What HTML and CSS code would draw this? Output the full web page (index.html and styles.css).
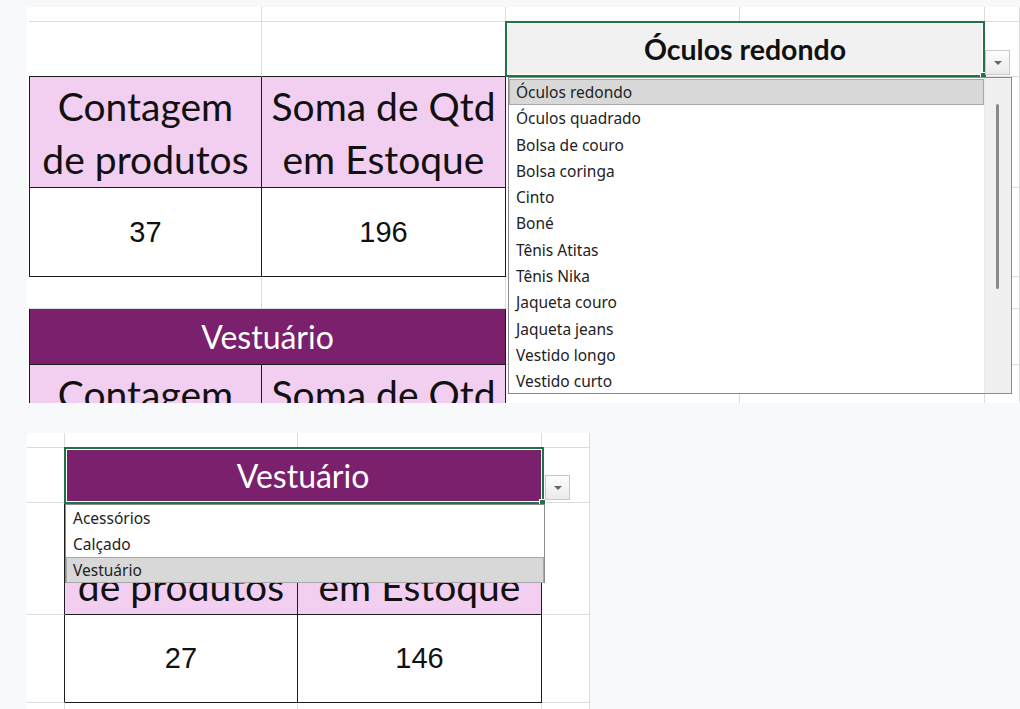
FILE: index.html
```html
<!DOCTYPE html>
<html lang="pt-BR">
<head>
  <meta charset="UTF-8">
  <meta name="viewport" content="width=device-width, initial-scale=1.0">
  <title>Estoque por categoria</title>
  <link rel="stylesheet" href="styles.css">
</head>
<body>
  <!-- produto selecionado -->
  <div class="sheet sheet-top">
    <div class="cell"></div>
    <div class="cell"></div>
    <div class="cell"></div>
    <div class="cell"></div>
    <div class="cell"></div>

    <div class="cell above"></div>
    <div class="cell above"></div>
    <div class="cell span2 picker grey">
      Óculos redondo
      <span class="sel"><span class="handle"></span></span>
      <span class="arrow"></span>
      <div class="list list-long">
        <div class="items">
          <div class="item active">Óculos redondo</div>
          <div class="item">Óculos quadrado</div>
          <div class="item">Bolsa de couro</div>
          <div class="item">Bolsa coringa</div>
          <div class="item">Cinto</div>
          <div class="item">Boné</div>
          <div class="item">Tênis Atitas</div>
          <div class="item">Tênis Nika</div>
          <div class="item">Jaqueta couro</div>
          <div class="item">Jaqueta jeans</div>
          <div class="item">Vestido longo</div>
          <div class="item">Vestido curto</div>
        </div>
        <div class="scrollbar"><span class="thumb"></span></div>
      </div>
    </div>
    <div class="cell"></div>

    <div class="cell tb hd first">Contagem<br>de produtos</div>
    <div class="cell tb hd">Soma de Qtd<br>em Estoque</div>
    <div class="cell"></div>
    <div class="cell"></div>
    <div class="cell"></div>

    <div class="cell tb num first">37</div>
    <div class="cell tb num">196</div>
    <div class="cell"></div>
    <div class="cell"></div>
    <div class="cell"></div>

    <div class="cell"></div>
    <div class="cell"></div>
    <div class="cell"></div>
    <div class="cell"></div>
    <div class="cell"></div>

    <div class="cell tb first span2 purple">Vestuário</div>
    <div class="cell"></div>
    <div class="cell"></div>
    <div class="cell"></div>

    <div class="cell tb hd first">Contagem<br>de produtos</div>
    <div class="cell tb hd">Soma de Qtd<br>em Estoque</div>
    <div class="cell"></div>
    <div class="cell"></div>
    <div class="cell"></div>
  </div>

  <!-- categoria selecionada -->
  <div class="sheet sheet-bottom">
    <div class="cell"></div>
    <div class="cell"></div>
    <div class="cell"></div>
    <div class="cell"></div>

    <div class="cell"></div>
    <div class="cell tb span2 picker purple">
      Vestuário
      <span class="sel sel-wide"><span class="handle"></span></span>
      <span class="arrow arrow-wide"></span>
      <div class="list list-short">
        <div class="items">
          <div class="item">Acessórios</div>
          <div class="item">Calçado</div>
          <div class="item active">Vestuário</div>
        </div>
      </div>
    </div>
    <div class="cell"></div>

    <div class="cell left"></div>
    <div class="cell tb hd">Contagem<br>de produtos</div>
    <div class="cell tb hd">Soma de Qtd<br>em Estoque</div>
    <div class="cell"></div>

    <div class="cell left"></div>
    <div class="cell tb num">27</div>
    <div class="cell tb num">146</div>
    <div class="cell"></div>

    <div class="cell"></div>
    <div class="cell"></div>
    <div class="cell"></div>
    <div class="cell"></div>
  </div>
</body>
</html>
```

FILE: styles.css
```css
body {
  margin: 0;
  background-color: #f8f9fb;
  font-family: Lato, "Noto Sans", sans-serif;
  color: #111;
}

.sheet {
  display: grid;
  background: #fff;
  overflow: hidden;
  margin-left: 27px;
}

.sheet-top {
  margin-top: 7px;
  width: 993px;
  height: 396px;
  padding-left: 2px;
  box-sizing: border-box;
  grid-template-columns: 233px 244px 234px 245px 35px;
  grid-template-rows: 15px 55px 111px 89px 32px 56px 111px;
}

.sheet-bottom {
  margin-top: 30px;
  width: 563px;
  height: 276px;
  grid-template-columns: 38px 233px 244px 48px;
  grid-template-rows: 15px 55px 112px 88px 30px;
}

.cell {
  box-sizing: border-box;
  border-right: 1px solid #dcdcdc;
  border-bottom: 1px solid #dcdcdc;
  display: flex;
  align-items: center;
  justify-content: center;
  text-align: center;
}

.span2 {
  grid-column: span 2;
}

/* table borders */
.tb {
  border-right-color: #1c1c1c;
  border-bottom-color: #1c1c1c;
}

.first {
  border-left: 1px solid #1c1c1c;
}

.above {
  border-bottom-color: #1c1c1c;
}

.left {
  border-right-color: #1c1c1c;
}

.hd {
  background: #f2cef0;
  font-size: 39px;
  line-height: 53px;
  padding-top: 2px;
}

.num {
  font-family: "Liberation Sans", Arial, sans-serif;
  font-size: 29px;
}

.purple {
  background: #7a206c;
  color: #fff;
  font-size: 32px;
}

.grey {
  background: #f1f1f1;
  font-weight: bold;
  font-size: 28.5px;
}

/* data validation dropdown */
.picker {
  position: relative;
}

.sel {
  position: absolute;
  top: -1px;
  left: -1px;
  right: -1px;
  bottom: -1px;
  border: 2px solid #217346;
  box-shadow: inset 0 0 0 1px #fff;
}

.sel-wide {
  right: -3px;
  bottom: -2px;
}

.handle {
  position: absolute;
  right: -4px;
  bottom: -4px;
  width: 5px;
  height: 5px;
  background: #217346;
  border: 1px solid #fff;
}

.arrow {
  position: absolute;
  left: calc(100% + 1px);
  top: 28px;
  width: 25px;
  height: 25px;
  box-sizing: border-box;
  border: 1px solid #c8c8c8;
  background: linear-gradient(#fdfdfd, #ebebeb);
}

.arrow::after {
  content: "";
  position: absolute;
  left: 8px;
  top: 10px;
  border-left: 4px solid transparent;
  border-right: 4px solid transparent;
  border-top: 4px solid #666;
}

.arrow-wide {
  left: calc(100% + 4px);
  top: 27px;
}

.list {
  position: absolute;
  left: 2px;
  top: calc(100% + 1px);
  box-sizing: border-box;
  border: 1px solid #8c8c8c;
  background: #fff;
  display: flex;
  font-family: "Noto Sans", sans-serif;
  font-size: 15.5px;
  font-weight: normal;
  color: #222;
  text-align: left;
}

.list-long {
  width: 504px;
  height: 317px;
}

.list-short {
  left: 0;
  top: calc(100% + 2px);
  width: 480px;
  height: 79px;
}

.items {
  flex: 1;
  padding-top: 1px;
}

.list-short .items {
  padding-top: 0;
}

.item {
  height: 26.3px;
  line-height: 27px;
  padding-left: 7px;
  box-sizing: border-box;
}

.list-short .item {
  height: 26px;
}

.item.active {
  background: #d8d8d8;
  border: 1px solid #a8a8a8;
  padding-left: 6px;
  line-height: 25px;
}

.scrollbar {
  width: 26px;
  background: #f0f0f0;
  border-left: 1px solid #e4ebf3;
}

.thumb {
  display: block;
  width: 3px;
  height: 185px;
  margin: 26px 0 0 11px;
  border-radius: 2px;
  background: #8a8a8a;
}
```
